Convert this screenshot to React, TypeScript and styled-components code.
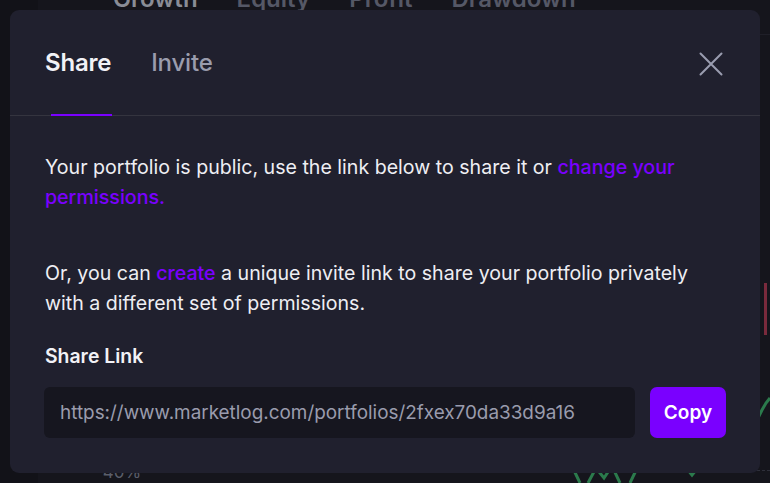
import React, { useState } from "react";
import styled, { createGlobalStyle } from "styled-components";

const Global = createGlobalStyle`
  html, body { margin: 0; padding: 0; background: #15151c; }
  body { font-family: Inter, "Noto Sans", sans-serif; overflow: hidden; }
  * { box-sizing: border-box; }
`;

const Page = styled.div`
  width: 770px;
  height: 483px;
  display: flex;
  position: relative;
  overflow: hidden;
  background: #15151c;
`;

const Sidebar = styled.div`
  width: 38px;
  flex: none;
  background: #121218;
`;

const Main = styled.div`
  flex: 1;
  display: flex;
  flex-direction: column;
  position: relative;
`;

const ChartTabs = styled.div`
  display: flex;
  gap: 39px;
  padding-left: 75px;
  height: 51px;
  margin-top: -16px;
  border-bottom: 1px solid #1f1f28;
`;

const ChartTab = styled.span<{ $active?: boolean }>`
  font-size: 24px;
  font-weight: 600;
  color: ${(p) => (p.$active ? "#8a8d96" : "#555866")};
`;

const ChartBottom = styled.div`
  margin-top: auto;
  height: 15px;
  display: flex;
  align-items: flex-start;
  gap: 6px;
  padding-left: 57px;
`;

const AxisLabel = styled.span`
  font-size: 17px;
  color: #5a5d6a;
  line-height: 20px;
  margin-top: -6px;
`;

const Dash = styled.div`
  flex: 1;
  margin-top: 2px;
  border-top: 1px dashed #2e2f3a;
`;

const Decor = styled.svg`
  position: absolute;
  left: 0;
  top: 0;
  pointer-events: none;
`;

const Overlay = styled.div`
  position: absolute;
  inset: 0;
  padding: 10px;
  display: flex;
`;

const Modal = styled.div`
  flex: 1;
  background: #20202e;
  border-radius: 9px;
  display: flex;
  flex-direction: column;
`;

const Header = styled.div`
  height: 106px;
  flex: none;
  display: flex;
  align-items: stretch;
  border-bottom: 1px solid #34343f;
  padding: 0 37px 0 35px;
`;

const Tabs = styled.div`
  display: flex;
  gap: 40px;
  flex: 1;
`;

const Tab = styled.button<{ $active?: boolean }>`
  background: none;
  border: none;
  padding: 0;
  margin: 0;
  cursor: pointer;
  position: relative;
  font-family: inherit;
  font-size: 24px;
  font-weight: ${(p) => (p.$active ? 600 : 500)};
  color: ${(p) => (p.$active ? "#f2f2f6" : "#9a9cad")};
  letter-spacing: -0.2px;
  &::after {
    content: "";
    position: absolute;
    left: 6px;
    right: -1px;
    bottom: -1px;
    height: 2px;
    background: ${(p) => (p.$active ? "#7a00ff" : "transparent")};
  }
`;

const Close = styled.button`
  background: none;
  border: none;
  padding: 0;
  width: 24px;
  height: 24px;
  align-self: center;
  margin-top: 2px;
  cursor: pointer;
  display: flex;
  align-items: center;
  justify-content: center;
`;

const Body = styled.div`
  padding: 36px 34px 36px 35px;
  display: flex;
  flex-direction: column;
`;

const Para = styled.p<{ $gap?: number }>`
  margin: 0;
  margin-top: ${(p) => p.$gap ?? 0}px;
  font-size: 19.6px;
  line-height: 30px;
  color: #eeeef3;
  font-weight: 400;
`;

const Link = styled.a`
  color: #7a00ff;
  font-weight: 500;
  text-decoration: none;
  cursor: pointer;
`;

const Label = styled.div`
  margin-top: 26px;
  font-size: 19.4px;
  line-height: 24px;
  font-weight: 600;
  color: #f2f2f6;
`;

const Row = styled.div`
  margin-top: 19px;
  display: flex;
  gap: 15px;
  margin-left: -1px;
`;

const Field = styled.div`
  flex: 1;
  height: 51px;
  background: #16161f;
  border-radius: 6px;
  display: flex;
  align-items: center;
  padding-left: 16px;
  font-size: 18.9px;
  color: #9a9cad;
`;

const CopyBtn = styled.button`
  width: 76px;
  height: 51px;
  border: none;
  border-radius: 7px;
  background: #7a00ff;
  color: #ffffff;
  font-family: inherit;
  font-size: 19px;
  font-weight: 600;
  cursor: pointer;
`;

export default function App() {
  const [tab, setTab] = useState("share");
  return (
    <>
      <Global />
      <Page>
        <Sidebar />
        <Main>
          <ChartTabs>
            <ChartTab $active>Growth</ChartTab>
            <ChartTab>Equity</ChartTab>
            <ChartTab>Profit</ChartTab>
            <ChartTab>Drawdown</ChartTab>
          </ChartTabs>
          <ChartBottom>
            <AxisLabel>-40%</AxisLabel>
            <Dash />
          </ChartBottom>
        </Main>
        <Decor width="770" height="483" viewBox="0 0 770 483">
          <rect x="764" y="283" width="3" height="52" fill="#7a2a3c" />
          <path d="M757 420 L762 410 L766 403 L770 398" stroke="#2b7a4c" strokeWidth="3" fill="none" />
          <path d="M570 462 L580 483 M588 483 L596 468 L604 478 L612 466 L620 483 M630 483 L640 462 M688 470 L692 475 L696 470" stroke="#2b7a4c" strokeWidth="3" fill="none" />
        </Decor>
        <Overlay>
          <Modal>
            <Header>
              <Tabs>
                <Tab $active={tab === "share"} onClick={() => setTab("share")}>Share</Tab>
                <Tab $active={tab === "invite"} onClick={() => setTab("invite")}>Invite</Tab>
              </Tabs>
              <Close aria-label="Close">
                <svg width="24" height="24" viewBox="0 0 24 24">
                  <path d="M1.5 1.5 L22.5 22.5 M22.5 1.5 L1.5 22.5" stroke="#9a9db0" strokeWidth="2" strokeLinecap="round" />
                </svg>
              </Close>
            </Header>
            <Body>
              <Para>
                Your portfolio is public, use the link below to share it or{" "}
                <Link>change your permissions.</Link>
              </Para>
              <Para $gap={46}>
                Or, you can <Link>create</Link> a unique invite link to share your portfolio privately
                with a different set of permissions.
              </Para>
              <Label>Share Link</Label>
              <Row>
                <Field>https://www.marketlog.com/portfolios/2fxex70da33d9a16</Field>
                <CopyBtn>Copy</CopyBtn>
              </Row>
            </Body>
          </Modal>
        </Overlay>
      </Page>
    </>
  );
}
